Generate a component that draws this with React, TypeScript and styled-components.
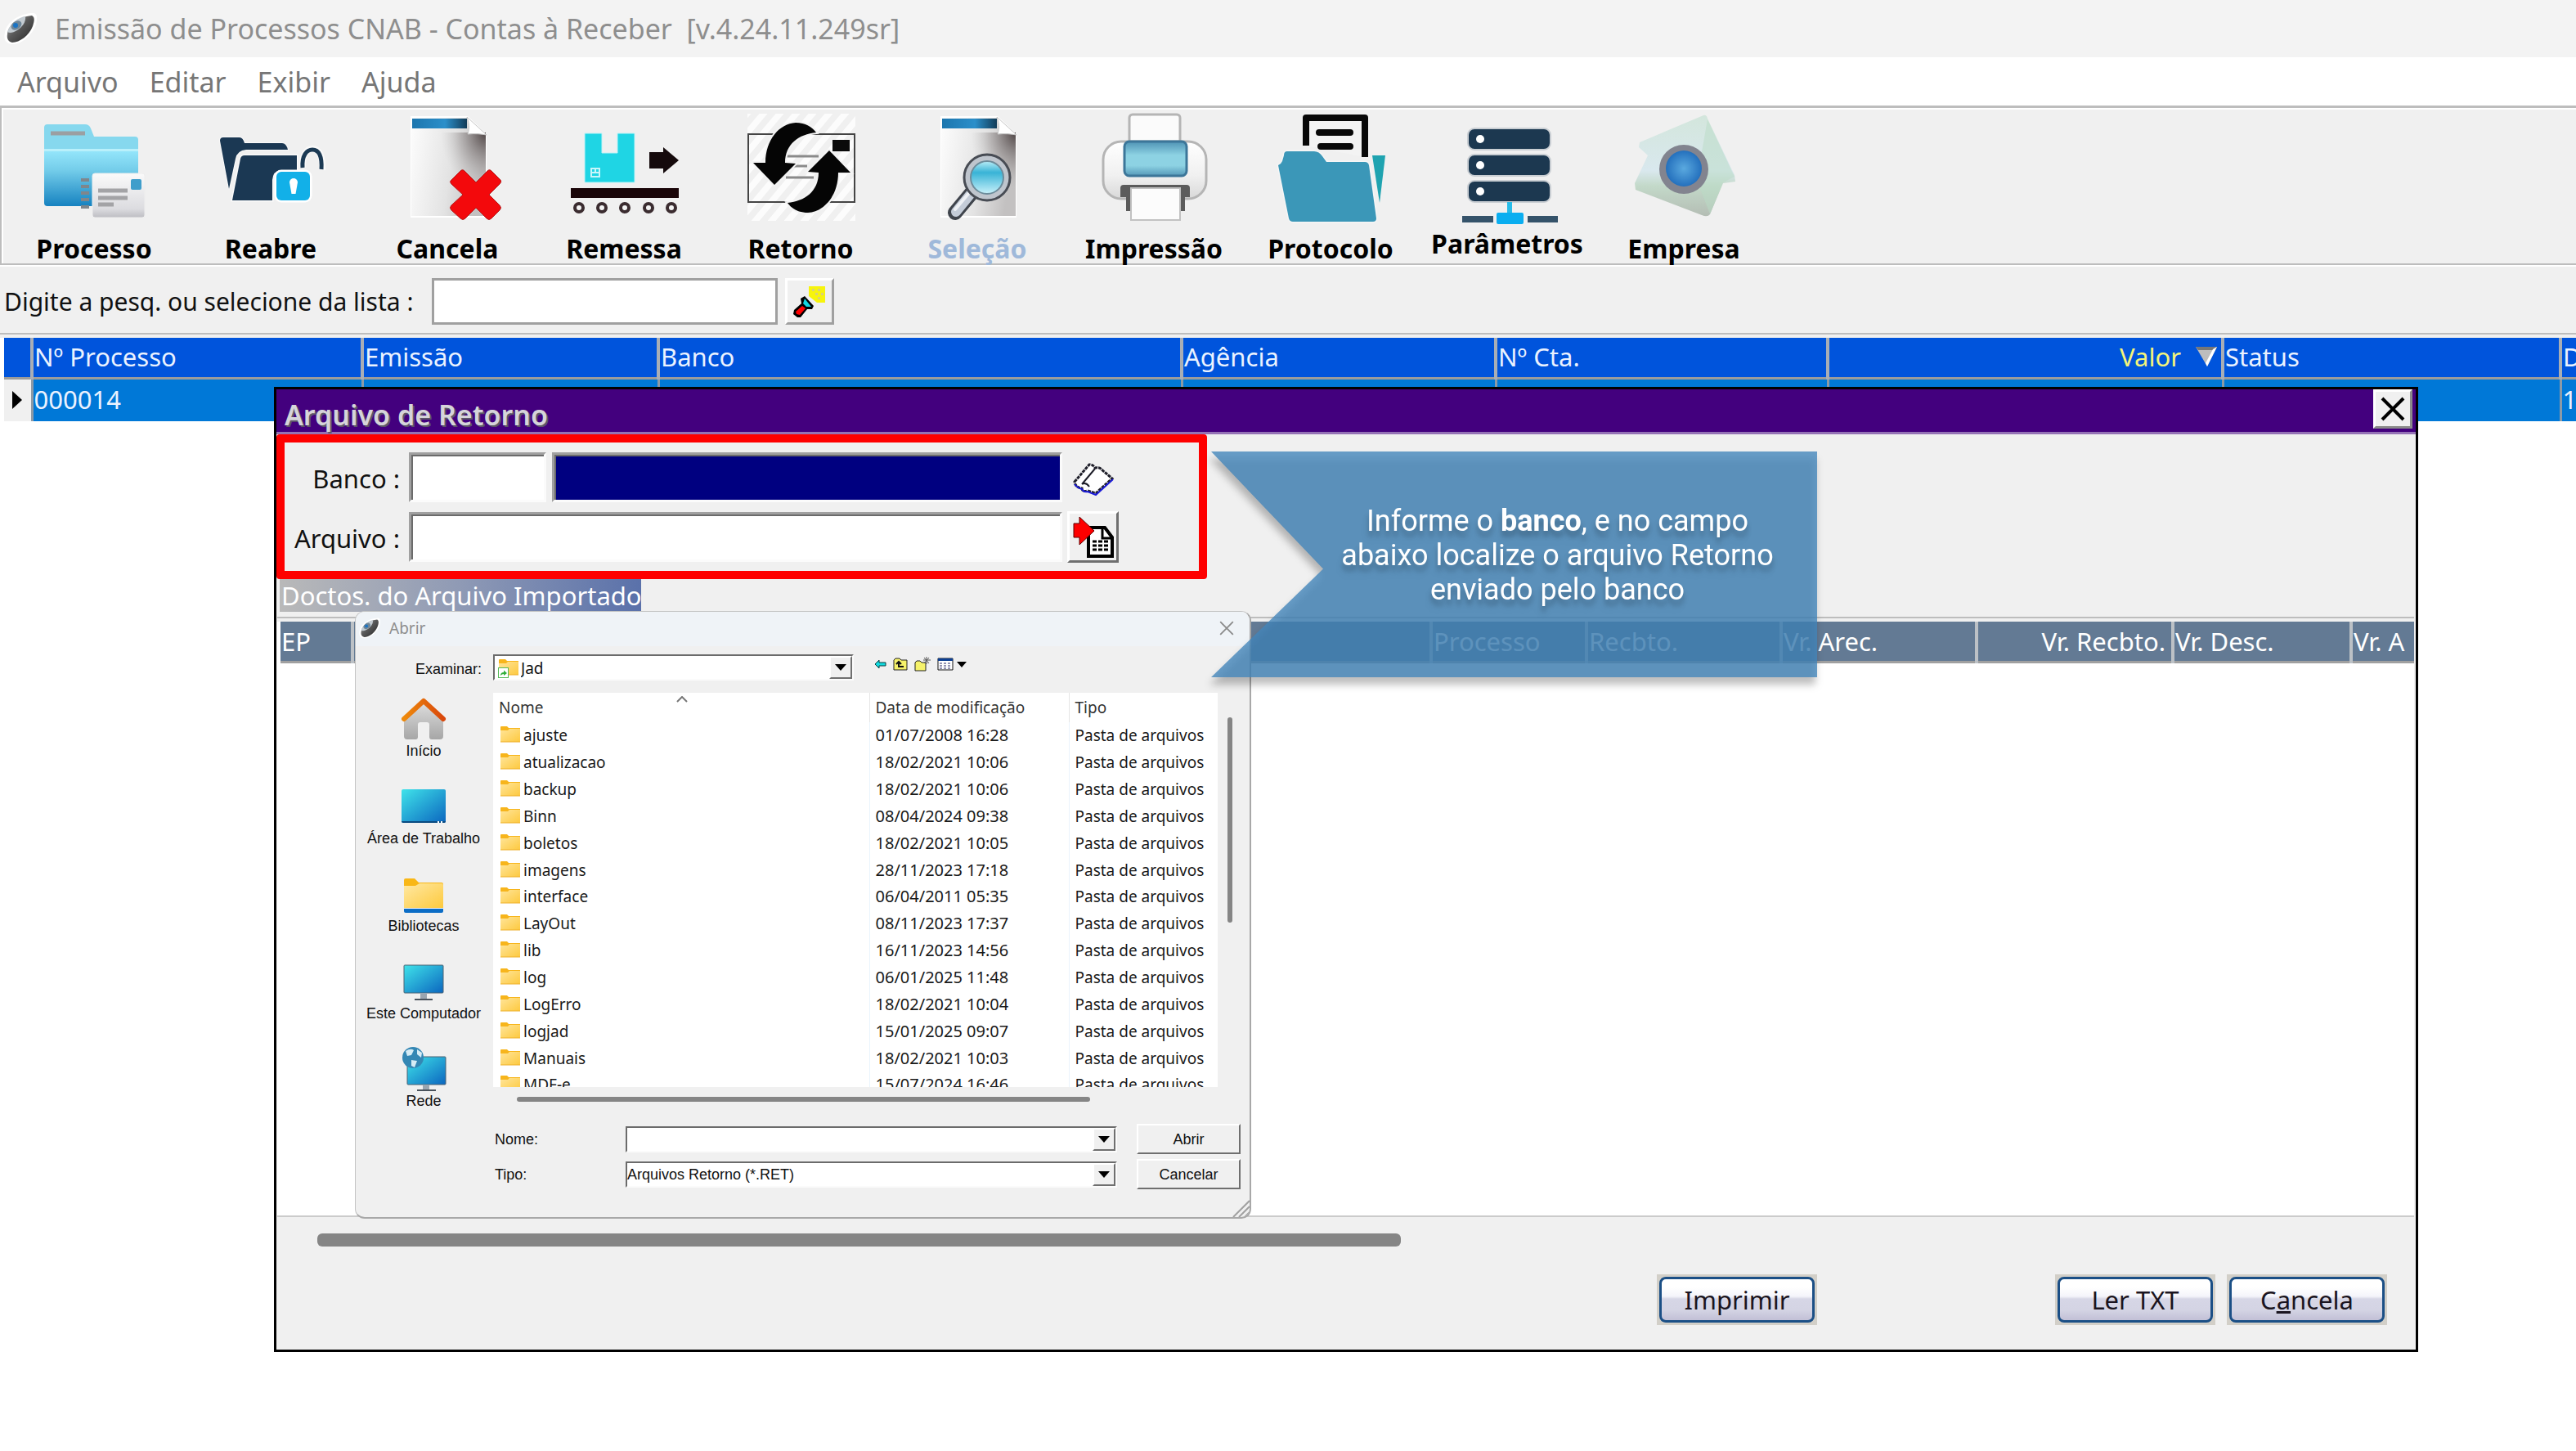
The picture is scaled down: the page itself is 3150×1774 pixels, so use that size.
import React from "react";
import styled, { createGlobalStyle, css } from "styled-components";

const ui = `"Noto Sans", "Open Sans", sans-serif`;
const arial = `"Liberation Sans", Arial, sans-serif`;

const GlobalStyle = createGlobalStyle`
  *, *::before, *::after { box-sizing: border-box; }
  body { margin: 0; background: #fff; }
  button, input, select { font: inherit; color: inherit; margin: 0; border-radius: 0; }
  button { cursor: default; }
`;

/* ---------- main window ---------- */

const Page = styled.div`
  position: relative;
  min-height: 100vh;
  overflow: hidden;
  background: #fff;
  font-family: ${ui};
  font-size: 30px;
  color: #111;
`;

const TitleBar = styled.header`
  display: flex;
  align-items: center;
  gap: 22px;
  height: 70px;
  padding-left: 5px;
  background: #f3f3f3;
`;

const WindowTitle = styled.h1`
  margin: 0;
  font-size: 34px;
  line-height: 44px;
  font-weight: 400;
  color: #8e8e8e;
  white-space: pre;
`;

const MenuBar = styled.nav`
  display: flex;
  gap: 38px;
  height: 59px;
  padding-left: 21px;
`;

const MenuItem = styled.button`
  padding: 0;
  border: 0;
  background: none;
  font-size: 34px;
  line-height: 58px;
  color: #767676;
`;

const ToolBar = styled.div`
  display: flex;
  height: 195px;
  padding-left: 5px;
  background: #f0f0f0;
  border: 2px solid #bdbdbd;
  border-top-width: 3px;
  border-right: 0;
  box-shadow: inset 2px 2px 0 #fff;
`;

const ToolButton = styled.button<{ $raised?: boolean }>`
  display: flex;
  flex-direction: column;
  align-items: center;
  gap: ${(p) => (p.$raised ? 2 : 8)}px;
  width: 216px;
  padding: 4px 0 0;
  border: 0;
  background: none;
  font-size: 32px;
  line-height: 40px;
  font-weight: 700;
  color: #000;
  &:disabled { color: #9fb9da; }
  svg { flex: none; }
`;

const SearchRow = styled.div`
  display: flex;
  align-items: center;
  height: 83px;
  padding: 4px 0 0 5px;
  background: #f0f0f0;
  border-top: 2px solid #fff;
`;

const SearchLabel = styled.label`
  width: 523px;
  line-height: 40px;
`;

const SearchInput = styled.input`
  width: 423px;
  height: 57px;
  padding: 0 8px;
  border: 3px solid #a0a0a0;
  background: #fff;
`;

const LightButton = styled.button`
  display: grid;
  place-items: center;
  width: 60px;
  height: 57px;
  margin-left: 9px;
  padding: 0;
  background: #f0f0f0;
  border: 3px solid;
  border-color: #fff #a0a0a0 #a0a0a0 #fff;
`;

const Records = styled.div`
  overflow: hidden;
  padding: 4px 0 0 5px;
  background: linear-gradient(#f0f0f0 0 4px, #fff 4px);
  border-top: 2px solid #bdbdbd;
`;

const RecordTable = styled.table`
  width: 3266px;
  table-layout: fixed;
  border-collapse: collapse;
  color: #eaf2ff;
  font-size: 31px;
  line-height: 40px;
  th, td {
    padding: 0 1px;
    font-weight: 400;
    text-align: left;
    white-space: nowrap;
    border-right: 4px solid #a9aeb5;
  }
  th { height: 49px; padding-bottom: 2px; background: #0054dc; border-bottom: 3px solid #9c9c9c; }
  td { height: 53px; padding-bottom: 2px; background: #0078d7; border-right-width: 3px; border-right-color: #8d9aa6; }
`;

const SortedHead = styled.div`
  display: flex;
  justify-content: flex-end;
  align-items: center;
  gap: 18px;
  padding-right: 4px;
  color: #f4f47a;
`;

const Marker = styled.td`
  && { background: #f0f0f0; padding: 0 0 0 8px; }
  svg { display: block; }
`;

/* ---------- return file window ---------- */

const Modal = styled.section`
  position: absolute;
  top: 473px;
  left: 335px;
  right: 193px;
  background: #f0f0f0;
  border: 3px solid #000;
`;

const ModalBar = styled.div`
  display: flex;
  align-items: flex-start;
  justify-content: space-between;
  height: 55px;
  padding: 0 4px 0 10px;
  background: #43007e;
  border-bottom: 3px solid #9472b5;
`;

const ModalTitle = styled.h2`
  margin: 0;
  padding-top: 9px;
  font-size: 34px;
  line-height: 44px;
  font-weight: 600;
  color: #d6d4da;
  text-shadow: 2px 2px 0 #5c5768;
`;

const CloseButton = styled.button`
  display: grid;
  place-items: center;
  width: 48px;
  height: 48px;
  padding: 0;
  background: #f0f0f0;
  border: 3px solid;
  border-color: #fff #8a8a8a #8a8a8a #fff;
`;

const Highlight = styled.form`
  display: flex;
  flex-direction: column;
  gap: 12px;
  width: 1138px;
  padding: 12px 0 11px;
  border: 10px solid #fe0000;
  border-radius: 4px;
`;

const FormRow = styled.div`
  display: flex;
  align-items: center;
  height: 61px;
`;

const FieldLabel = styled.label`
  width: 152px;
  padding: 2px 11px 0 0;
  text-align: right;
  font-size: 31px;
  line-height: 40px;
`;

const Field = styled.input<{ $width: number; $navy?: boolean }>`
  width: ${(p) => p.$width}px;
  height: 61px;
  padding: 0 8px;
  background: ${(p) => (p.$navy ? "#000080" : "#fff")};
  color: ${(p) => (p.$navy ? "#fff" : "#111")};
  border: 3px solid;
  border-color: #a0a0a0 #fbfbfb #fbfbfb #a0a0a0;
  box-shadow: inset 2px 2px 0 #6b6b6b;
  & + & { margin-left: 7px; }
`;

const BareButton = styled.button`
  display: grid;
  place-items: center;
  padding: 4px 0 0;
  margin-left: 12px;
  border: 0;
  background: none;
`;

const RaisedButton = styled.button`
  display: grid;
  place-items: center;
  width: 63px;
  height: 63px;
  margin-left: 6px;
  padding: 0;
  background: #f0f0f0;
  border: 3px solid;
  border-color: #fff #6f6f6f #6f6f6f #fff;
`;

const Caption = styled.div`
  width: 442px;
  margin-left: 4px;
  padding-left: 2px;
  background: linear-gradient(90deg, #b9b9b9, #8f9ab5 50%, #5a71aa);
  color: #fff;
  font-size: 31px;
  line-height: 40px;
  white-space: nowrap;
`;

const DocsArea = styled.div`
  height: 734px;
  margin: 6px 2px 0 1px;
  padding: 4px 0 0 4px;
  overflow: hidden;
  background: linear-gradient(#f0f0f0 0 4px, #fff 4px);
  border-top: 2px solid #bdbdbd;
  border-bottom: 2px solid #cbcbcb;
`;

const DocsTable = styled.table`
  width: 2736px;
  table-layout: fixed;
  border-collapse: collapse;
  color: #fff;
  font-size: 31px;
  line-height: 40px;
  th {
    height: 49px;
    padding: 0 1px;
    overflow: hidden;
    background: #637a94;
    font-weight: 400;
    text-align: left;
    white-space: nowrap;
    border-right: 4px solid #bcc1c6;
    border-bottom: 3px solid #a0a0a0;
  }
  th.right { text-align: right; padding-right: 7px; }
`;

const ScrollThumb = styled.div`
  width: 1325px;
  height: 16px;
  margin: 20px 0 34px 50px;
  border-radius: 6px;
  background: #858585;
`;

const ButtonRow = styled.div`
  display: flex;
  justify-content: flex-end;
  gap: 14px;
  padding: 0 35px 30px 0;
`;

const XpButton = styled.button<{ $apart?: boolean }>`
  width: 196px;
  height: 62px;
  margin-right: ${(p) => (p.$apart ? 277 : 0)}px;
  padding: 3px;
  border: 0;
  background: #d2cfc8;
  font-size: 31px;
  span.face {
    display: block;
    height: 56px;
    border: 3px solid #1b4f86;
    border-radius: 8px;
    background: linear-gradient(#fff 0 20%, #f4f4fa 42%, #d6d6e6 48%, #d4d4e4 75%, #c2c0d6);
    line-height: 50px;
    color: #1a1420;
  }
`;

/* ---------- open file dialog ---------- */

const Dialog = styled.section`
  position: absolute;
  top: 271px;
  left: 96px;
  width: 1096px;
  height: 743px;
  overflow: hidden;
  background: #f0f0f0;
  border: 1px solid #c4c4c4;
  border-right: 2px solid #a8a8a8;
  border-bottom: 2px solid #a8a8a8;
  border-radius: 12px;
  font-family: ${arial};
  font-size: 18px;
  line-height: 22px;
  color: #111;
`;

const DialogBar = styled.div`
  display: flex;
  align-items: center;
  gap: 11px;
  height: 42px;
  padding: 0 19px 2px 4px;
  background: #eff3f7;
  font-family: ${ui};
  font-size: 19px;
  color: #8e8e8e;
  button { margin-left: auto; padding: 0; border: 0; background: none; line-height: 0; }
`;

const LookIn = styled.div`
  display: flex;
  align-items: center;
  height: 32px;
  margin-top: 10px;
`;

const LookLabel = styled.label`
  width: 168px;
  padding: 4px 14px 0 0;
  text-align: right;
`;

const comboFrame = css`
  display: flex;
  height: 32px;
  background: #fff;
  border: 2px solid;
  border-color: #6b6b6b #fbfbfb #fbfbfb #6b6b6b;
`;

const Combo = styled.div<{ $width: number }>`
  ${comboFrame}
  position: relative;
  width: ${(p) => p.$width}px;
  select, input {
    flex: 1;
    min-width: 0;
    height: 28px;
    padding: 0;
    border: 0;
    background: none;
    appearance: none;
    outline: 0;
  }
`;

const FolderSelect = styled.select`
  && { padding: 2px 0 0 32px; font-family: ${ui}; font-size: 19px; }
`;

const Lead = styled.span`
  position: absolute;
  left: 4px;
  top: 3px;
  line-height: 0;
  pointer-events: none;
`;

const ArrowCap = styled.span`
  display: grid;
  place-items: center;
  width: 28px;
  height: 28px;
  background: #f0f0f0;
  border: 2px solid;
  border-color: #fff #6f6f6f #6f6f6f #fff;
  pointer-events: none;
`;

const SmallTools = styled.div`
  display: flex;
  align-items: center;
  gap: 8px;
  margin: 0 0 8px 25px;
  button { padding: 0; border: 0; background: none; line-height: 0; }
`;

const DialogMain = styled.div`
  display: flex;
  margin-top: 15px;
`;

const Places = styled.nav`
  display: flex;
  flex-direction: column;
  gap: 28px;
  width: 168px;
  padding: 3px 2px 0 0;
`;

const Place = styled.button`
  display: flex;
  flex-direction: column;
  align-items: center;
  gap: 1px;
  padding: 0;
  border: 0;
  background: none;
  white-space: nowrap;
`;

const FilesSide = styled.div`
  flex: 1;
`;

const ListRow = styled.div`
  display: flex;
  gap: 12px;
`;

const FileList = styled.div`
  width: 886px;
  height: 482px;
  overflow: hidden;
  background: #fff;
`;

const VerticalThumb = styled.div`
  width: 6px;
  height: 251px;
  margin-top: 30px;
  border-radius: 3px;
  background: #858585;
`;

const HorizontalThumb = styled.div`
  width: 701px;
  height: 6px;
  margin: 12px 0 27px 29px;
  border-radius: 3px;
  background: #858585;
`;

const FileTable = styled.table`
  width: 886px;
  height: 496px;
  table-layout: fixed;
  border-collapse: collapse;
  font-family: ${ui};
  font-size: 19px;
  line-height: 28px;
  color: #191919;
  th, td { padding: 0 7px; text-align: left; font-weight: 400; white-space: nowrap; }
  th { height: 36px; border-right: 1px solid #e5e5e5; color: #333; }
  td { height: 32px; border-right: 1px solid #eaf4fc; }
  td.date { font-size: 20px; }
  th:last-child, td:last-child { border-right: 0; }
`;

const NameHead = styled.div`
  display: grid;
  grid-template-columns: 217px 1fr;
`;

const FileName = styled.div`
  display: flex;
  align-items: center;
  gap: 3px;
  padding-left: 1px;
`;

const Fields = styled.div`
  display: grid;
  grid-template-columns: 162px 601px 127px;
  row-gap: 6px;
  align-items: center;
  label { padding-left: 2px; }
  button.push {
    width: 127px;
    height: 37px;
    margin-left: 24px;
    padding: 0;
    background: #f0f0f0;
    border: 2px solid;
    border-color: #fff #6f6f6f #6f6f6f #fff;
  }
`;

const Grip = styled.svg`
  position: absolute;
  right: 0;
  bottom: 0;
`;

/* ---------- callout ---------- */

const Callout = styled.aside`
  position: absolute;
  top: 76px;
  left: 1143px;
  width: 741px;
  height: 276px;
  filter: drop-shadow(-2px 9px 5px rgba(0, 0, 0, 0.32));
`;

const CalloutShape = styled.div`
  display: flex;
  align-items: center;
  height: 276px;
  padding: 0 16px 22px 122px;
  background: rgba(66, 133, 187, 0.79);
  clip-path: polygon(0 0, 100% 0, 100% 100%, 0 100%, 137px 52%);
  p {
    flex: 1;
    margin: 0;
    font-family: Roboto, sans-serif;
    font-size: 36px;
    line-height: 42px;
    text-align: center;
    color: #fff;
    text-shadow: 0 7px 6px rgba(0, 0, 0, 0.25);
  }
`;

/* ---------- drawings ---------- */

const Logo = ({ size }: { size: number }) => (
  <svg width={size} height={size} viewBox="0 0 40 40">
    <defs>
      <linearGradient id="lg" x1="0" y1="0" x2="1" y2="1">
        <stop offset="0" stopColor="#b4b4b4" /><stop offset=".45" stopColor="#5a5a5a" /><stop offset="1" stopColor="#222" />
      </linearGradient>
    </defs>
    <path d="M1 25C3 12 18 2 34 1c7-1 7 6 5 14C34 29 20 40 9 39 2 38-1 33 1 25Z" fill="#fff" />
    <path d="M4 27C5 15 17 6 34 4c4 2 3 7 1 13C31 28 19 37 10 37 5 36 3 32 4 27Z" fill="url(#lg)" />
    <path d="M4 24C8 12 19 6 26 5c1 7-4 13-10 17-5 3-9 4-12 2Z" fill="#c3cbd1" />
    <ellipse cx="15" cy="16" rx="7" ry="5" fill="#6f8698" transform="rotate(-35 15 16)" />
    <circle cx="14" cy="16" r="3" fill="#1b74c4" />
  </svg>
);

const Icon = ({ children }: { children: React.ReactNode }) => (
  <svg width="136" height="140" viewBox="0 0 136 140">{children}</svg>
);

const PaperBase = () => (
  <>
    <defs>
      <linearGradient id="pp" x1="0" y1="0" x2="1" y2="0.2">
        <stop offset="0" stopColor="#fdfdfd" /><stop offset=".6" stopColor="#e3e3e3" /><stop offset="1" stopColor="#c3c1c1" />
      </linearGradient>
      <linearGradient id="pb" x1="0" y1="0" x2="1" y2="0">
        <stop offset="0" stopColor="#1c76ae" /><stop offset=".6" stopColor="#2b8fca" /><stop offset="1" stopColor="#123c58" />
      </linearGradient>
      <radialGradient id="ps" cx="1" cy="0" r="1">
        <stop offset="0" stopColor="#4e4444" /><stop offset=".6" stopColor="#8a8484" stopOpacity=".4" /><stop offset="1" stopColor="#bbb" stopOpacity="0" />
      </radialGradient>
    </defs>
    <path d="M23 6H93L116 28V130H23Z" fill="#fff" />
    <path d="M24 8H92L115 28V128H24Z" fill="url(#pp)" />
    <path d="M60 26H115V96H60Z" fill="url(#ps)" />
    <path d="M25 9H92V21H25Z" fill="url(#pb)" />
    <path d="M92 7C96 18 94 24 93 28C102 27 110 28 116 29Z" fill="#fff" stroke="#c7c7c7" />
  </>
);

const ProcessIcon = () => (
  <Icon>
    <defs>
      <linearGradient id="f1" x1="0" y1="0" x2="0" y2="1">
        <stop offset="0" stopColor="#95e6fb" /><stop offset=".35" stopColor="#74cdea" /><stop offset="1" stopColor="#1682c0" />
      </linearGradient>
      <linearGradient id="f2" x1="0" y1="0" x2="0" y2="1">
        <stop offset="0" stopColor="#fafafa" /><stop offset=".8" stopColor="#dcdce0" /><stop offset="1" stopColor="#bdbdc2" />
      </linearGradient>
    </defs>
    <path d="M7 20Q7 16 11 16H57Q62 16 64 21L68 31H118Q122 31 122 35V60H7Z" fill="#86d8ee" />
    <path d="M7 48H122V116H11Q7 116 7 112Z" fill="url(#f1)" />
    <path d="M7 47.500H122" stroke="#b9f0fb" strokeWidth="3" />
    <path d="M15 27H57" stroke="#9b9fa2" strokeWidth="5" />
    <path d="M52 84H62M52 92H62M52 100H62M52 108H62M52 117H62" stroke="#7f868c" strokeWidth="4" />
    <rect x="66" y="76" width="64" height="54" rx="3" fill="url(#f2)" stroke="#eee" />
    <path d="M73 97H109M73 106H109M73 114H92" stroke="#a3a3a6" strokeWidth="5" />
    <rect x="113" y="83" width="13" height="13" rx="2" fill="#3f9ecb" />
  </Icon>
);

const ReopenIcon = () => (
  <Icon>
    <path d="M6 36Q6 32 10 32H30Q34 32 36 39H82Q87 39 89 47H38Q27 48 25 58L17 95Z" fill="#1b3853" stroke="#fafafa" strokeWidth="2" paintOrder="stroke" />
    <path d="M31 58Q32 54 36 54H100V72H80Q71 73 70 84V109H21Z" fill="#1b3853" stroke="#fafafa" strokeWidth="3" paintOrder="stroke" />
    <path d="M107 69C106 54 112 46 119 46C127 46 132 55 131 72" fill="none" stroke="#fafafa" strokeWidth="8" />
    <path d="M107 69C106 54 112 47 119 47C127 47 131 55 130 71" fill="none" stroke="#1c3a54" strokeWidth="5" />
    <rect x="75" y="74" width="41" height="35" rx="6" fill="#12b0e8" stroke="#fff" strokeWidth="5" paintOrder="stroke" />
    <path d="M91 87a5 5 0 1 1 10 0L98.500 101H93.500Z" fill="#fff" />
  </Icon>
);

const CancelIcon = () => (
  <Icon>
    <PaperBase />
    <path d="M84 73Q87 70 90 74L103 87L116 74Q119 70 122 73L133 84Q135 86 132 89L119 102L132 115Q135 118 132 121L122 131Q119 134 116 131L103 118L90 131Q87 134 84 131L73 121Q70 118 73 115L87 102L73 89Q70 86 73 84Z" fill="#f3090c" stroke="#b51a1a" strokeWidth="1" />
  </Icon>
);

const SendIcon = () => (
  <Icon>
    <path d="M20 27H41V51H60V27H81V87H20Z" fill="#1fd5e4" stroke="#bff3f7" />
    <path d="M28 70H38V80H28ZM33 70V76M28 75H38" fill="none" stroke="#c7f6fa" strokeWidth="2" />
    <path d="M99 50H116V44L135 60L116 76V70H99Z" fill="#150a0c" />
    <rect x="3" y="94" width="132" height="12" fill="#1a0508" />
    {[13, 41, 69, 98, 126].map((x) => (
      <circle key={x} cx={x} cy="118" r="5" fill="#f4f4f4" stroke="#3b2c30" strokeWidth="4" />
    ))}
  </Icon>
);

const ReturnIcon = () => (
  <Icon>
    <defs>
      <pattern id="st" width="20" height="20" patternUnits="userSpaceOnUse" patternTransform="skewX(-40)">
        <rect width="10" height="20" fill="#fff" />
      </pattern>
    </defs>
    <rect x="3" y="3" width="132" height="131" fill="url(#st)" opacity=".8" />
    <rect x="4" y="28" width="130" height="83" fill="none" stroke="#444" strokeWidth="2" />
    <path d="M50 55H90M60 67H76M50 81H84" stroke="#8a8a8a" strokeWidth="3" />
    <rect x="107" y="35" width="21" height="14" fill="#0a0a0a" />
    <g fill="#050505" stroke="#f4f4f4" strokeWidth="4" paintOrder="stroke">
      <path d="M25 63C25 35 42 15 62 14C74 14 82 19 87 26C66 28 49 40 49 63L62 64L36 90L10 63Z" />
      <path d="M25 63C25 35 42 15 62 14C74 14 82 19 87 26C66 28 49 40 49 63L62 64L36 90L10 63Z" transform="rotate(180 69.5 69)" />
    </g>
  </Icon>
);

const SelectIcon = () => (
  <Icon>
    <PaperBase />
    <defs>
      <linearGradient id="ln" x1="0" y1="0" x2="0" y2="1">
        <stop offset="0" stopColor="#b9edf7" /><stop offset=".35" stopColor="#38b3d6" /><stop offset="1" stopColor="#c9f1fa" />
      </linearGradient>
    </defs>
    <path d="M61 100L41 124" stroke="#3f444c" strokeWidth="18" strokeLinecap="round" />
    <path d="M60 101L42 123" stroke="#c4ccd8" strokeWidth="12" strokeLinecap="round" />
    <path d="M57 101L41 120" stroke="#eef1f5" strokeWidth="4" strokeLinecap="round" />
    <circle cx="80" cy="81" r="28" fill="#bfc5cd" stroke="#484c54" strokeWidth="3" />
    <circle cx="80" cy="81" r="20" fill="url(#ln)" stroke="#6d8c9b" strokeWidth="2" />
  </Icon>
);

const PrintIcon = () => (
  <Icon>
    <defs>
      <linearGradient id="pr" x1="0" y1="0" x2="0" y2="1">
        <stop offset="0" stopColor="#fff" /><stop offset=".6" stopColor="#f0f0f0" /><stop offset="1" stopColor="#d9d9d9" />
      </linearGradient>
      <linearGradient id="pl" x1="0" y1="0" x2="0" y2="1">
        <stop offset="0" stopColor="#4f93b5" /><stop offset=".4" stopColor="#8dd2e3" /><stop offset=".7" stopColor="#8dd2e3" /><stop offset="1" stopColor="#5598b8" />
      </linearGradient>
    </defs>
    <rect x="38" y="4" width="62" height="50" rx="4" fill="#fbfbfb" stroke="#b5b5b5" strokeWidth="3" />
    <rect x="6" y="37" width="126" height="70" rx="22" fill="url(#pr)" stroke="#b5b5b5" strokeWidth="3" />
    <rect x="32" y="37" width="76" height="42" rx="6" fill="url(#pl)" stroke="#3c7699" strokeWidth="3" />
    <path d="M27 94Q27 90 31 90H108Q112 90 112 94V105H106V122H34V105H27Z" fill="#5b5b5b" />
    <path d="M40 94H100V133H40Z" fill="#fcfcfc" stroke="#c2c2c2" strokeWidth="2" />
  </Icon>
);

const ProtocolIcon = () => (
  <Icon>
    <path d="M119 54H135L128 112Z" fill="#1fa3b0" />
    <path d="M38 42V8H110V56" fill="#f3f3f3" stroke="#080808" strokeWidth="8" strokeLinejoin="round" />
    <path d="M54 26H92M56 43H92" stroke="#080808" strokeWidth="8" strokeLinecap="round" />
    <path d="M11 54Q11 49 15 49H48Q54 49 58 55L63 62H110Q114 62 115 66L124 131Q124 135 120 135H22Q18 135 17 131L4 66Q8 64 9 61Z" fill="#3b97b8" stroke="#f6f6f6" strokeWidth="3" paintOrder="stroke" />
  </Icon>
);

const ParamsIcon = () => (
  <Icon>
    {[21, 53, 85].map((y) => (
      <g key={y}>
        <rect x="20" y={y} width="101" height="26" rx="8" fill="#1c3850" stroke="#c9ced3" strokeWidth="2" />
        <ellipse cx="35" cy={y + 13} rx="5" ry="5" fill="#fff" />
      </g>
    ))}
    <path d="M71 111V128" stroke="#27bce9" strokeWidth="6" />
    <rect x="55" y="124" width="33" height="14" rx="2" fill="#0aaef0" />
    <path d="M13 132H51M93 132H130" stroke="#35536a" strokeWidth="8" />
  </Icon>
);

const CompanyIcon = () => (
  <Icon>
    <defs>
      <linearGradient id="em" x1="0.500" y1="0" x2="0.500" y2="1">
        <stop offset="0" stopColor="#d3e6dc" /><stop offset=".55" stopColor="#d9e8ee" /><stop offset=".7" stopColor="#c3d9c9" /><stop offset="1" stopColor="#b4bdb4" />
      </linearGradient>
      <radialGradient id="eb"><stop offset="0" stopColor="#5aa9df" /><stop offset="1" stopColor="#2470bd" /></radialGradient>
    </defs>
    <path d="M92 5Q96 4 97 9L130 78L131 86L116 88L100 126Q97 130 90 127L9 96L8 88L24 54L13 44L14 38Z" fill="url(#em)" />
    <path d="M97 10L130 80L116 87L100 126L84 84Z" fill="#b9dcc5" opacity=".5" />
    <circle cx="68" cy="71" r="30" fill="#82848f" />
    <circle cx="68" cy="70" r="22" fill="url(#eb)" />
  </Icon>
);

const TorchIcon = () => (
  <svg width="42" height="42" viewBox="0 0 42 42">
    <path d="M20 2H40V22H30L20 14Z" fill="#f7f40c" />
    <path d="M24 5h3v3h-3zM31 5h3v3h-3zM28 10h3v3h-3zM35 10h3v3h-3zM31 15h3v3h-3z" fill="#d9d17a" />
    <path d="M10 17L15 14L26 26L24 30L18 30L10 40L6 40L1 36L2 31L11 23Z" fill="#000" />
    <path d="M12 26L16 29L9 37L5 36L4 33Z" fill="#f00" />
    <path d="M15 17L23 27L17 27L13 23Z" fill="#12d5df" />
  </svg>
);

const BookIcon = () => (
  <svg width="52" height="42" viewBox="0 0 52 42">
    <path d="M3 24L21 3Q26 3 28 7Q34 6 36 9L49 20L29 38L19 35Q12 37 12 32Q4 31 3 24Z" fill="#fff" stroke="#1f1f2a" strokeWidth="3" strokeDasharray="4 1" />
    <path d="M28 8L12 27M12 27Q17 24 21 30" fill="none" stroke="#1f1f2a" strokeWidth="2" />
    <path d="M3 27Q6 31 12 33Q14 37 19 36L29 40L50 21" fill="none" stroke="#1a1ad8" strokeWidth="2" />
  </svg>
);

const ImportIcon = () => (
  <svg width="52" height="52" viewBox="0 0 52 52">
    <path d="M20 14H40L49 26V49H20Z" fill="#fff" stroke="#000" strokeWidth="4" />
    <path d="M37 14V27H49" fill="none" stroke="#000" strokeWidth="3" />
    <path d="M25 31H44M25 36H44M25 41H44" stroke="#000" strokeWidth="3" strokeDasharray="5 2" />
    <path d="M2 9H9V1L27 18L9 35V26H2Z" fill="#fe0000" stroke="#5c0000" strokeWidth="1" />
  </svg>
);

const Cross = ({ size, width, color }: { size: number; width: number; color: string }) => (
  <svg width={size} height={size} viewBox="0 0 30 30">
    <path d="M2 2L28 28M28 2L2 28" stroke={color} strokeWidth={width} />
  </svg>
);

const Triangle = () => (
  <svg width="14" height="8" viewBox="0 0 14 8"><path d="M0 0H14L7 8Z" fill="#000" /></svg>
);

const Folder = ({ link }: { link?: boolean }) => (
  <svg width="26" height="24" viewBox="0 0 26 24">
    <defs>
      <linearGradient id="fo" x1="0" y1="0" x2="1" y2="1">
        <stop offset="0" stopColor="#ffe59a" /><stop offset="1" stopColor="#fdc93f" />
      </linearGradient>
    </defs>
    <path d="M1 2Q1 1 2 1H9L11 3H25V8H1Z" fill="#f7b51c" />
    <path d="M1 6H10L12 4H25V20H1Z" fill="url(#fo)" />
    <path d="M1 20H25" stroke="#eeb02c" strokeWidth="1" />
    {link && (
      <>
        <rect x="0.500" y="11.500" width="12" height="12" fill="#fff" stroke="#55b957" />
        <path d="M3 21Q3 17 7 17V14.500L11 18L7 21V19Q5 19 3 21Z" fill="#2fae3a" />
      </>
    )}
  </svg>
);

const Gradients = () => (
  <defs>
    <linearGradient id="sc" x1="0" y1="0" x2="1" y2="1">
      <stop offset="0" stopColor="#3fe3ea" /><stop offset="1" stopColor="#0b66bf" />
    </linearGradient>
    <linearGradient id="hr" x1="0" y1="0" x2="1" y2="0">
      <stop offset="0" stopColor="#ee8a0c" /><stop offset="1" stopColor="#d9480b" />
    </linearGradient>
    <linearGradient id="hg" x1="0" y1="0" x2="0" y2="1">
      <stop offset="0" stopColor="#dcdcdc" /><stop offset="1" stopColor="#a6a6a6" />
    </linearGradient>
    <linearGradient id="lb" x1="0" y1="0" x2="1" y2="1">
      <stop offset="0" stopColor="#ffe8a3" /><stop offset="1" stopColor="#fdca3e" />
    </linearGradient>
  </defs>
);

const placeIcons: Record<string, React.ReactNode> = {
  "Início": (
    <>
      <path d="M28 10L52 28V50Q52 54 48 54H38Q35 54 35 51V36Q35 33 32 33H24Q21 33 21 36V51Q21 54 18 54H8Q4 54 4 50V28Z" fill="url(#hg)" />
      <path d="M4 29L28 7L52 29" fill="none" stroke="url(#hr)" strokeWidth="6" strokeLinecap="round" strokeLinejoin="round" />
    </>
  ),
  "Área de Trabalho": (
    <>
      <rect x="1" y="8" width="54" height="41" rx="2" fill="url(#sc)" />
      <path d="M1 47H55V47Q55 49 53 49H3Q1 49 1 47Z" fill="#0a4a80" />
      <path d="M45 48h2M49 48h2" stroke="#fff" strokeWidth="2" />
    </>
  ),
  Bibliotecas: (
    <>
      <path d="M4 12Q4 10 6 10H17L22 15H50Q52 15 52 17V24H4Z" fill="#f9b716" />
      <path d="M4 19H18L23 16H50Q52 16 52 18V46H4Z" fill="url(#lb)" />
      <path d="M4 47H52V50Q52 52 50 52H6Q4 52 4 50Z" fill="#0c6dc6" />
    </>
  ),
  "Este Computador": (
    <>
      <rect x="4" y="9" width="48" height="34" rx="1" fill="url(#sc)" stroke="#4c6373" strokeWidth="1" />
      <path d="M24 43H32V50H24Z" fill="#9aa5b0" />
      <path d="M17 51H39" stroke="#49525b" strokeWidth="2" />
    </>
  ),
  Rede: (
    <>
      <rect x="8" y="14" width="47" height="34" rx="1" fill="url(#sc)" stroke="#4c6373" strokeWidth="1" />
      <path d="M27 48H35V54H27Z" fill="#9aa5b0" />
      <path d="M20 55H43" stroke="#49525b" strokeWidth="2" />
      <circle cx="15" cy="15" r="13" fill="#3487b4" />
      <path d="M6 7Q12 3 16 6L13 12L8 13ZM13 18L20 19L17 27L13 25ZM20 5L26 9L25 15L20 11Z" fill="#d6ecf5" />
    </>
  ),
};

/* ---------- data ---------- */

const tools: { label: string; icon: React.ReactNode; disabled?: boolean; raised?: boolean }[] = [
  { label: "Processo", icon: <ProcessIcon /> },
  { label: "Reabre", icon: <ReopenIcon /> },
  { label: "Cancela", icon: <CancelIcon /> },
  { label: "Remessa", icon: <SendIcon /> },
  { label: "Retorno", icon: <ReturnIcon /> },
  { label: "Seleção", icon: <SelectIcon />, disabled: true },
  { label: "Impressão", icon: <PrintIcon /> },
  { label: "Protocolo", icon: <ProtocolIcon /> },
  { label: "Parâmetros", icon: <ParamsIcon />, raised: true },
  { label: "Empresa", icon: <CompanyIcon /> },
];

const files: [string, string][] = [
  ["ajuste", "01/07/2008 16:28"],
  ["atualizacao", "18/02/2021 10:06"],
  ["backup", "18/02/2021 10:06"],
  ["Binn", "08/04/2024 09:38"],
  ["boletos", "18/02/2021 10:05"],
  ["imagens", "28/11/2023 17:18"],
  ["interface", "06/04/2011 05:35"],
  ["LayOut", "08/11/2023 17:37"],
  ["lib", "16/11/2023 14:56"],
  ["log", "06/01/2025 11:48"],
  ["LogErro", "18/02/2021 10:04"],
  ["logjad", "15/01/2025 09:07"],
  ["Manuais", "18/02/2021 10:03"],
  ["MDF-e", "15/07/2024 16:46"],
];

const recordCols = [34, 404, 362, 640, 384, 406, 483, 413, 140];
const docCols = [88, 400, 400, 519, 190, 238, 239, 240, 218, 204];

/* ---------- sections ---------- */

const OpenDialog = () => (
  <Dialog aria-label="Abrir">
    <DialogBar>
      <Logo size={26} />
      <span>Abrir</span>
      <button type="button" aria-label="Fechar"><Cross size={18} width={3} color="#8b8b8b" /></button>
    </DialogBar>
    <LookIn>
      <LookLabel htmlFor="look">Examinar:</LookLabel>
      <Combo $width={441}>
        <Lead><Folder link /></Lead>
        <FolderSelect id="look"><option>Jad</option></FolderSelect>
        <ArrowCap><Triangle /></ArrowCap>
      </Combo>
      <SmallTools>
        <button type="button" aria-label="Voltar">
          <svg width="15" height="12" viewBox="0 0 15 12"><path d="M1 6L6 1V4H14V8H6V11Z" fill="#12dbe0" stroke="#063a3c" /></svg>
        </button>
        <button type="button" aria-label="Um nível acima">
          <svg width="18" height="16" viewBox="0 0 18 16">
            <path d="M1 3L3 1H8L10 3H17V15H1Z" fill="#f6f26a" stroke="#222" />
            <path d="M7 6V11H13M4 8L7 5L10 8" fill="none" stroke="#111" strokeWidth="2" />
          </svg>
        </button>
        <button type="button" aria-label="Nova pasta">
          <svg width="20" height="18" viewBox="0 0 20 18">
            <path d="M1 7L3 5H7L9 7H14V17H1Z" fill="#f6f26a" stroke="#222" />
            <path d="M15 0V9M11 4H20M12 1L18 8M18 1L12 8" stroke="#555" />
          </svg>
        </button>
        <button type="button" aria-label="Exibir">
          <svg width="36" height="16" viewBox="0 0 36 16">
            <path d="M1 1H19V15H1Z" fill="#fff" stroke="#111" />
            <path d="M1 1H19V4H1Z" fill="#0d3f92" />
            <path d="M3 7H6M8 7H11M13 7H16M3 10H6M8 10H11M13 10H16M3 13H6M8 13H11M13 13H16" stroke="#2b2b66" />
            <path d="M24 5H36L30 12Z" fill="#000" />
          </svg>
        </button>
      </SmallTools>
    </LookIn>
    <DialogMain>
      <Places>
        {Object.keys(placeIcons).map((name) => (
          <Place type="button" key={name}>
            <svg width="56" height="56" viewBox="0 0 56 56"><Gradients />{placeIcons[name]}</svg>
            <span>{name}</span>
          </Place>
        ))}
      </Places>
      <FilesSide>
        <ListRow>
          <FileList>
            <FileTable>
              <colgroup><col style={{ width: 460 }} /><col style={{ width: 244 }} /><col /></colgroup>
              <thead>
                <tr>
                  <th>
                    <NameHead>
                      <span>Nome</span>
                      <svg width="14" height="8" viewBox="0 0 14 8"><path d="M1 7L7 1L13 7" fill="none" stroke="#777" strokeWidth="2" /></svg>
                    </NameHead>
                  </th>
                  <th>Data de modificação</th>
                  <th>Tipo</th>
                </tr>
              </thead>
              <tbody>
                {files.map(([name, date]) => (
                  <tr key={name}>
                    <td><FileName><Folder />{name}</FileName></td>
                    <td className="date">{date}</td>
                    <td>Pasta de arquivos</td>
                  </tr>
                ))}
              </tbody>
            </FileTable>
          </FileList>
          <VerticalThumb />
        </ListRow>
        <HorizontalThumb />
        <Fields>
          <label htmlFor="fname">Nome:</label>
          <Combo $width={601}><input id="fname" /><ArrowCap><Triangle /></ArrowCap></Combo>
          <button type="button" className="push">Abrir</button>
          <label htmlFor="ftype">Tipo:</label>
          <Combo $width={601}>
            <select id="ftype"><option>Arquivos Retorno (*.RET)</option></select>
            <ArrowCap><Triangle /></ArrowCap>
          </Combo>
          <button type="button" className="push">Cancelar</button>
        </Fields>
      </FilesSide>
    </DialogMain>
    <Grip width="22" height="22" viewBox="0 0 22 22">
      <path d="M2 22L22 2M9 22L22 9M16 22L22 16" stroke="#a0a0a0" strokeWidth="2" />
    </Grip>
  </Dialog>
);

export default function App() {
  return (
    <Page>
      <GlobalStyle />
      <TitleBar>
        <Logo size={40} />
        <WindowTitle>{"Emissão de Processos CNAB - Contas à Receber  [v.4.24.11.249sr]"}</WindowTitle>
      </TitleBar>
      <MenuBar>
        {["Arquivo", "Editar", "Exibir", "Ajuda"].map((m) => <MenuItem key={m}>{m}</MenuItem>)}
      </MenuBar>
      <ToolBar>
        {tools.map((t) => (
          <ToolButton key={t.label} disabled={t.disabled} $raised={t.raised}>{t.icon}{t.label}</ToolButton>
        ))}
      </ToolBar>
      <SearchRow>
        <SearchLabel htmlFor="search">Digite a pesq. ou selecione da lista :</SearchLabel>
        <SearchInput id="search" />
        <LightButton aria-label="Pesquisar"><TorchIcon /></LightButton>
      </SearchRow>
      <Records>
        <RecordTable>
          <colgroup>{recordCols.map((w, i) => <col key={i} style={{ width: w }} />)}</colgroup>
          <thead>
            <tr>
              <th />
              <th>Nº Processo</th>
              <th>Emissão</th>
              <th>Banco</th>
              <th>Agência</th>
              <th>Nº Cta.</th>
              <th>
                <SortedHead>
                  Valor
                  <svg width="26" height="24" viewBox="0 0 26 24">
                    <path d="M0 0H26L14 24Z" fill="#bdbdbd" /><path d="M0 0H26L24 4H3Z" fill="#777" /><path d="M26 0L14 24L12 20L21 3Z" fill="#fff" />
                  </svg>
                </SortedHead>
              </th>
              <th>Status</th>
              <th>D</th>
            </tr>
          </thead>
          <tbody>
            <tr>
              <Marker><svg width="14" height="22" viewBox="0 0 14 22"><path d="M2 0L14 11L2 22Z" fill="#000" /></svg></Marker>
              <td>000014</td>
              <td /><td /><td /><td /><td /><td />
              <td>1</td>
            </tr>
          </tbody>
        </RecordTable>
      </Records>

      <Modal aria-label="Arquivo de Retorno">
        <ModalBar>
          <ModalTitle>Arquivo de Retorno</ModalTitle>
          <CloseButton aria-label="Fechar"><Cross size={30} width={4} color="#000" /></CloseButton>
        </ModalBar>
        <Highlight>
          <FormRow>
            <FieldLabel htmlFor="bank">Banco :</FieldLabel>
            <Field id="bank" $width={168} />
            <Field aria-label="Nome do banco" $width={624} $navy readOnly />
            <BareButton type="button" aria-label="Consultar banco"><BookIcon /></BareButton>
          </FormRow>
          <FormRow>
            <FieldLabel htmlFor="file">Arquivo :</FieldLabel>
            <Field id="file" $width={799} />
            <RaisedButton type="button" aria-label="Localizar arquivo"><ImportIcon /></RaisedButton>
          </FormRow>
        </Highlight>
        <Caption>Doctos. do Arquivo Importado</Caption>
        <DocsArea>
          <DocsTable>
            <colgroup>{docCols.map((w, i) => <col key={i} style={{ width: w }} />)}</colgroup>
            <thead>
              <tr>
                <th>EP</th>
                <th /><th /><th />
                <th>Processo</th>
                <th>Recbto.</th>
                <th>Vr. Arec.</th>
                <th className="right">Vr. Recbto.</th>
                <th>Vr. Desc.</th>
                <th>Vr. A</th>
              </tr>
            </thead>
          </DocsTable>
        </DocsArea>
        <ScrollThumb />
        <ButtonRow>
          <XpButton $apart><span className="face">Imprimir</span></XpButton>
          <XpButton><span className="face">Ler TXT</span></XpButton>
          <XpButton><span className="face">C<u>a</u>ncela</span></XpButton>
        </ButtonRow>
        <OpenDialog />
        <Callout>
          <CalloutShape>
            <p>Informe o <b>banco</b>, e no campo<br />abaixo localize o arquivo Retorno<br />enviado pelo banco</p>
          </CalloutShape>
        </Callout>
      </Modal>
    </Page>
  );
}
